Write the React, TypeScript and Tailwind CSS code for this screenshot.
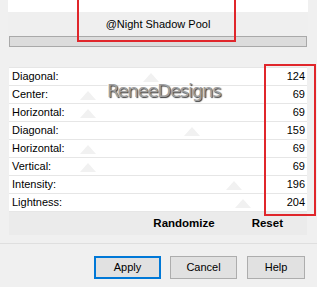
import React from "react";

type Row = { label: string; value: number };

const rows: Row[] = [
  { label: "Diagonal:", value: 124 },
  { label: "Center:", value: 69 },
  { label: "Horizontal:", value: 69 },
  { label: "Diagonal:", value: 159 },
  { label: "Horizontal:", value: 69 },
  { label: "Vertical:", value: 69 },
  { label: "Intensity:", value: 196 },
  { label: "Lightness:", value: 204 },
];

function SliderRow({ row }: { row: Row }) {
  // faint thumb showing the slider position behind the row
  const left = Math.round((row.value / 255) * 293) - 8;
  return (
    <div className="relative flex h-[18px] items-center justify-between border-b border-[#e6e6e6] pl-[3px] pr-[2px]">
      <div
        className="absolute top-[5px] h-0 w-0 border-x-[8px] border-b-[9px] border-x-transparent border-b-[#f1f1f1]"
        style={{ left }}
      />
      <span className="relative">{row.label}</span>
      <span className="relative">{row.value}</span>
    </div>
  );
}

export default function App() {
  return (
    <div className="relative h-[287px] w-[317px] overflow-hidden bg-[#f0f0f0] font-['Liberation_Sans',Arial,sans-serif] text-[11px] leading-none text-black">
      <div className="ml-[8px] w-[300px] bg-white">
        <div className="h-[12px]" />
        <div className="flex h-[24px] items-center justify-center bg-[#efefef] text-[11px]">
          @Night Shadow Pool
        </div>
      </div>
      <div className="ml-[9px] h-[11px] w-[298px] border border-[#a9a9a9] bg-[#dcdcdc]" />
      <div className="h-[20px]" />

      <div className="relative ml-[9px] w-[298px] border-t border-[#e6e6e6] bg-white">
        {rows.map((row, i) => (
          <SliderRow key={i} row={row} />
        ))}
        <div className="pointer-events-none absolute left-[98px] top-[14px] font-['DejaVu_Sans',sans-serif] text-[18px] tracking-[-1.2px] text-[#a0a0a0] [text-shadow:1px_1px_1px_#3a3a3a,-1px_-1px_0_#ffffff]">
          ReneeDesigns
        </div>
      </div>

      <div className="ml-[9px] flex h-[23px] w-[298px] items-center justify-end gap-[37px] bg-[#ebebeb] pr-[24px] text-[11.5px] font-bold">
        <span>Randomize</span>
        <span>Reset</span>
      </div>

      <div className="h-[8px]" />
      <div className="h-px bg-[#dfdfdf]" />

      <div className="flex justify-end gap-[9px] pr-[12px] pt-[12px]">
        <button className="h-[23px] w-[67px] border-2 border-[#0078d7] bg-[#e1e1e1] text-[11px]">
          Apply
        </button>
        <button className="h-[23px] w-[67px] border border-[#adadad] bg-[#e1e1e1] text-[11px]">
          Cancel
        </button>
        <button className="ml-px h-[23px] w-[58px] border border-[#adadad] bg-[#e1e1e1] text-[11px]">
          Help
        </button>
      </div>

      <div className="pointer-events-none absolute left-[77px] top-[-2px] h-[44px] w-[159px] border-2 border-[#e0262b]" />
      <div className="pointer-events-none absolute left-[264px] top-[64px] h-[152px] w-[52px] border-2 border-[#e0262b]" />
    </div>
  );
}
